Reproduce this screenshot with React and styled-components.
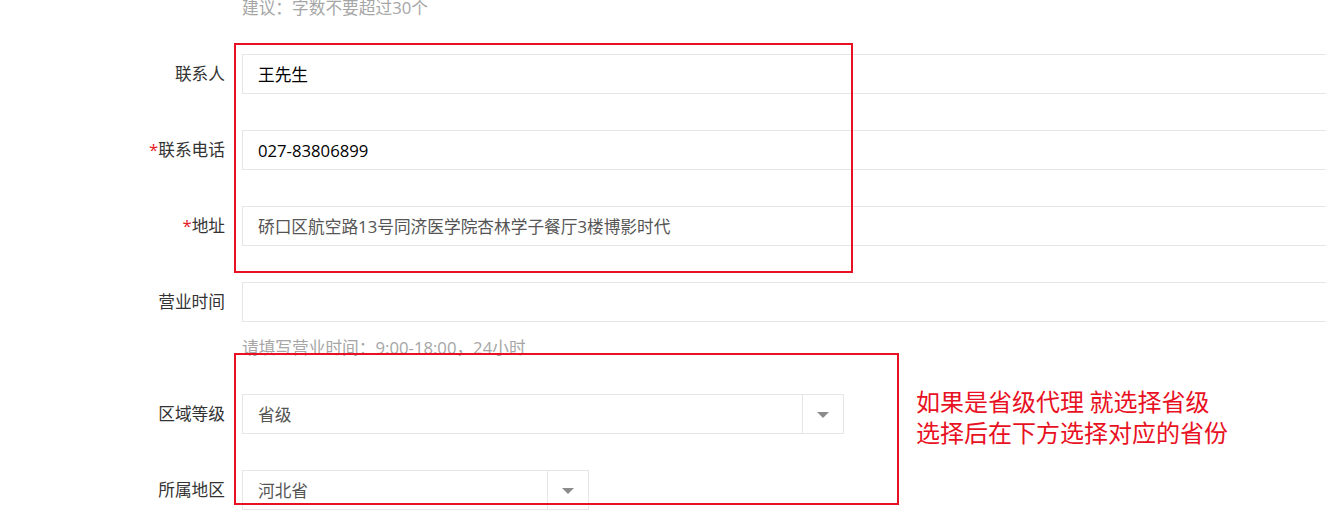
import React from "react";
import styled, { createGlobalStyle } from "styled-components";

const FONT = `"Open Sans", "Noto Sans CJK SC", sans-serif`;

const GlobalStyle = createGlobalStyle`
  html, body {
    margin: 0;
    padding: 0;
    background: #fff;
    overflow: hidden;
  }
  body {
    font-family: ${FONT};
    font-size: 16.7px;
    color: #333;
  }
`;

const Page = styled.div`
  position: relative;
  width: 1326px;
  height: 522px;
  overflow: hidden;
`;

const Form = styled.div`
  display: flex;
  flex-direction: column;
  gap: 36px;
`;

const FormItem = styled.div`
  display: grid;
  grid-template-columns: 225px 1fr;
  column-gap: 17px;
  align-items: center;
  margin-top: ${(p) => p.$offset || 0}px;
`;

const Label = styled.label`
  grid-column: 1;
  text-align: right;
  font-size: 16.7px;
  line-height: 20px;
  color: #333;
  white-space: nowrap;
`;

const Star = styled.span`
  color: #e5161e;
`;

const Field = styled.input`
  grid-column: 2;
  box-sizing: border-box;
  width: 1200px;
  height: 40px;
  border: 1px solid #e6e6e6;
  border-radius: 0;
  padding: 0 15px;
  margin: 0;
  outline: none;
  background: #fff;
  font-family: ${FONT};
  font-size: 16.7px;
  color: ${(p) => p.$tone || "#000"};
`;

const Hint = styled.div`
  grid-column: 2;
  margin-top: ${(p) => (p.$standalone ? 0 : 16)}px;
  font-size: 16.7px;
  line-height: 20px;
  color: #a6a6a6;
  white-space: nowrap;
`;

const Select = styled.div`
  grid-column: 2;
  box-sizing: border-box;
  display: flex;
  width: ${(p) => p.$width}px;
  height: 40px;
  border: 1px solid #e6e6e6;
  background: #fff;
`;

const SelectValue = styled.div`
  flex: 1;
  display: flex;
  align-items: center;
  padding-left: 15px;
  font-size: 16.7px;
  color: #555;
`;

const SelectArrow = styled.div`
  width: 40px;
  border-left: 1px solid #e6e6e6;
  display: flex;
  align-items: center;
  justify-content: center;
  &::after {
    content: "";
    width: 0;
    height: 0;
    border-left: 6px solid transparent;
    border-right: 6px solid transparent;
    border-top: 6px solid #8c8c8c;
    margin-top: 1px;
  }
`;

const Callout = styled.div`
  position: absolute;
  box-sizing: border-box;
  left: ${(p) => p.$x}px;
  top: ${(p) => p.$y}px;
  width: ${(p) => p.$w}px;
  height: ${(p) => p.$h}px;
  border: 2px solid #e81123;
  pointer-events: none;
`;

const Note = styled.div`
  position: absolute;
  left: calc(100% + 19px);
  top: 30px;
  display: flex;
  flex-direction: column;
  font-family: "Noto Sans CJK SC", sans-serif;
  font-size: 24px;
  line-height: 31px;
  color: #e81123;
  white-space: nowrap;
`;

const NoteLine = styled.span`
  display: block;
  height: 31px;
`;

const TextRow = ({ label, required, value, tone }) => (
  <FormItem>
    <Label>
      {required && <Star>*</Star>}
      {label}
    </Label>
    <Field readOnly defaultValue={value} $tone={tone} />
  </FormItem>
);

const SelectRow = ({ label, value, width }) => (
  <FormItem>
    <Label>{label}</Label>
    <Select $width={width}>
      <SelectValue>{value}</SelectValue>
      <SelectArrow />
    </Select>
  </FormItem>
);

export default function App() {
  return (
    <>
      <GlobalStyle />
      <Page>
        <Form>
          <FormItem $offset={-2}>
            <Hint $standalone>建议：字数不要超过30个</Hint>
          </FormItem>
          <TextRow label="联系人" value="王先生" />
          <TextRow label="联系电话" required value="027-83806899" />
          <TextRow
            label="地址"
            required
            value="硚口区航空路13号同济医学院杏林学子餐厅3楼博影时代"
            tone="#555"
          />
          <FormItem>
            <Label>营业时间</Label>
            <Field readOnly defaultValue="" />
            <Hint>请填写营业时间：9:00-18:00，24小时</Hint>
          </FormItem>
          <SelectRow label="区域等级" value="省级" width={602} />
          <SelectRow label="所属地区" value="河北省" width={347} />
        </Form>
        <Callout $x={234} $y={43} $w={619} $h={230} />
        <Callout $x={234} $y={353} $w={665} $h={152}>
          <Note>
            <NoteLine>如果是省级代理 就选择省级</NoteLine>
            <NoteLine>选择后在下方选择对应的省份</NoteLine>
          </Note>
        </Callout>
      </Page>
    </>
  );
}
